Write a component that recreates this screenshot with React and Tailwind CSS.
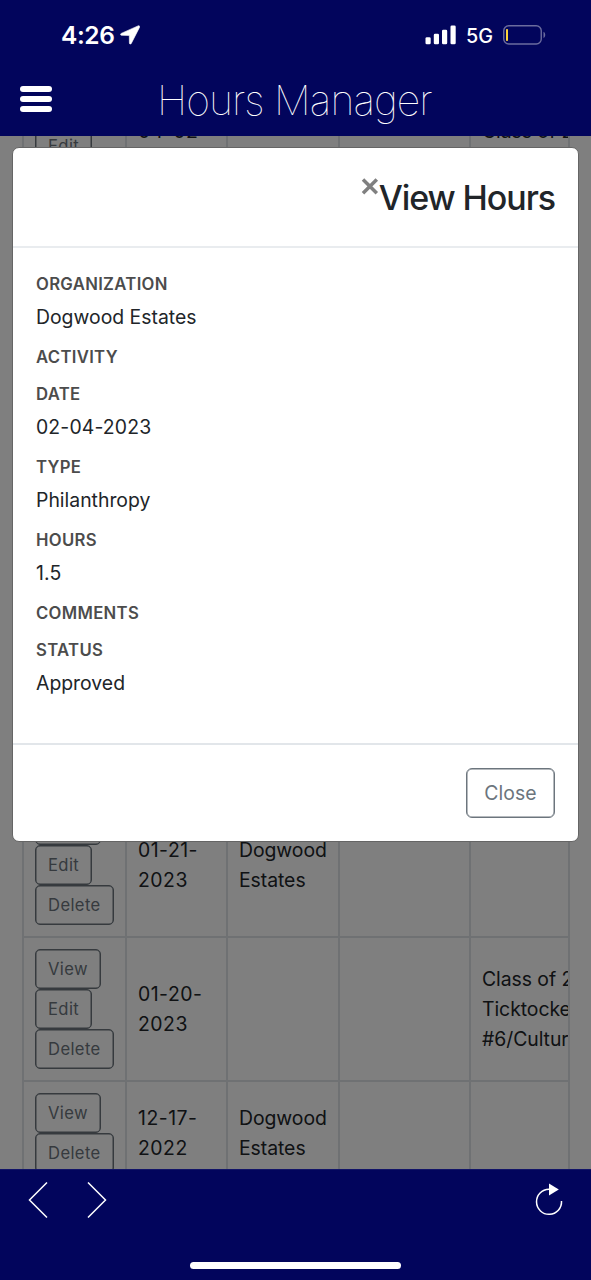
import React from "react";

const rowButton =
  "flex h-[40px] items-center rounded-[5px] border border-[#6c757d] px-[12px] text-[16.6px] tracking-[0.4px] text-[#6c757d] shadow-[inset_0_0_0_0.5px_#6c757d]";

const rows = [
  { height: "h-[144px]", actions: ["View", "Edit", "Delete"], date: ["04-02-", "2023"], org: [], detail: ["Class of 2026", "Ticktockers"] },
  { height: "h-[575px]", actions: [], date: [], org: [], detail: [] },
  { height: "h-[144px]", actions: ["View", "Edit", "Delete"], date: ["01-21-", "2023"], org: ["Dogwood", "Estates"], detail: [] },
  { height: "h-[144px]", actions: ["View", "Edit", "Delete"], date: ["01-20-", "2023"], org: [], detail: ["Class of 2026", "Ticktockers", "#6/Cultural"] },
  { height: "h-[104px]", actions: ["View", "Delete"], date: ["12-17-", "2022"], org: ["Dogwood", "Estates"], detail: [] },
];

const fields = [
  ["ORGANIZATION", "Dogwood Estates"],
  ["ACTIVITY", ""],
  ["DATE", "02-04-2023"],
  ["TYPE", "Philanthropy"],
  ["HOURS", "1.5"],
  ["COMMENTS", ""],
  ["STATUS", "Approved"],
];

function Lines({ lines, className = "tracking-[-0.05px]", last }) {
  return (
    <div
      className={
        "flex flex-col justify-center whitespace-nowrap pl-[11px] text-[19.4px] leading-[30px] " +
        className +
        (last ? "" : " border-r-2 border-[#dee2e6]")
      }
    >
      {lines.map((t) => (
        <span key={t}>{t}</span>
      ))}
    </div>
  );
}

function StatusBar() {
  return (
    <div className="flex h-[70px] items-center justify-between pl-[61px] pr-[45px]">
      <div className="flex items-center gap-[6px]">
        <span className="text-[24.5px] font-semibold leading-[30px] tracking-[-0.4px]">4:26</span>
        <svg width="20" height="20" viewBox="0 0 20 20" fill="currentColor">
          <path d="M18 .9 1.200 8.400C.2 8.900.4 10.300 1.600 10.300l7.300.1c.3 0 .4.1.4.4l.1 7.200c0 1.300 1.400 1.500 1.900.4L19.600 2.200C20 1.100 19.100.4 18 .9Z" stroke="currentColor" strokeWidth="0.600" />
        </svg>
      </div>
      <div className="flex items-center">
        <svg width="31" height="20" viewBox="0 0 31 20" fill="currentColor">
          <rect x="0.500" y="12.200" width="5.200" height="7" rx="1.300" />
          <rect x="8.800" y="8.700" width="5.200" height="10.500" rx="1.300" />
          <rect x="17" y="4.700" width="5.200" height="14.500" rx="1.300" />
          <rect x="25.500" y="0.400" width="5.200" height="18.800" rx="1.300" />
        </svg>
        <span className="ml-[10px] mt-[2px] w-[37px] text-[19.8px] font-medium leading-[24px]">5G</span>
        <svg width="43" height="20" viewBox="0 0 43 20" fill="none">
          <rect x="0.750" y="0.750" width="37.500" height="18.200" rx="5" stroke="#6b6c9e" strokeWidth="1.400" />
          <rect x="3" y="4" width="2" height="12" rx="0.800" fill="#ffd43a" />
          <path d="M40.500 6.700v6.200c2.300-1.200 2.300-5 0-6.200Z" fill="#6b6c9e" />
        </svg>
      </div>
    </div>
  );
}

function Dialog() {
  return (
    <section className="absolute left-[12px] top-[11px] flex h-[695px] w-[567px] flex-col rounded-[7px] border border-[#656565] bg-white text-[#212529]">
      <header className="flex h-[100px] items-start justify-end border-b-2 border-[#e9ecef] pr-[23px] pt-[27px]">
        <svg className="mt-[3px]" width="18" height="18" viewBox="0 0 18 18">
          <path d="M2 1.500 15.800 15.300M15.800 1.500 2 15.300" stroke="#808080" strokeWidth="3.500" />
        </svg>
        <h2 className="text-[34px] font-medium leading-[46px] tracking-[-1.080px]">View Hours</h2>
      </header>
      <div className="flex h-[495px] flex-col pl-[23px] pt-[25px]">
        {fields.map(([label, value]) => (
          <div key={label} className={value ? "h-[73px]" : "h-[37px]"}>
            <div className="h-[22px] text-[16.700px] font-semibold leading-[22px] tracking-[0.320px] text-[#4c4c4c]">{label}</div>
            <div className={"mt-[7px] text-[19.400px] leading-[30px] " + (/^\d/.test(value) ? "tracking-[0.140px]" : "tracking-[0px]")}>
              {value}
            </div>
          </div>
        ))}
      </div>
      <footer className="flex flex-1 items-start justify-end border-t-2 border-[#e2e6ea] pr-[23px] pt-[23px]">
        <button className="h-[50px] w-[89px] rounded-[6px] border border-[#6c757d] text-[19.400px] leading-[47px] tracking-[0.100px] text-[#6c757d] shadow-[inset_0_0_0_0.5px_#6c757d]">
          Close
        </button>
      </footer>
    </section>
  );
}

export default function App() {
  return (
    <div className="flex h-[1280px] w-[591px] flex-col overflow-hidden bg-[#02055c] font-['Inter','Liberation_Sans',sans-serif]">
      <header className="h-[136px] shrink-0 text-white">
        <StatusBar />
        <div className="flex h-[58px] items-center pl-[20px]">
          <div className="flex w-[32px] flex-col gap-[4px]">
            <span className="h-[6px] rounded-full bg-white" />
            <span className="h-[6px] rounded-full bg-white" />
            <span className="h-[6px] rounded-full bg-white" />
          </div>
          <h1 className="ml-[105px] mt-[2px] whitespace-nowrap text-[41px] font-[125] leading-[54px] tracking-[-0.960px]">Hours Manager</h1>
        </div>
      </header>

      <main className="relative h-[1033px] shrink-0 overflow-hidden bg-white pl-[22px] pr-[21px] text-[#212529]">
        <div className="-mt-[61px] overflow-hidden border-l-2 border-r-2 border-[#dee2e6]">
          {rows.map((row, i) => (
            <div
              key={i}
              className={"grid grid-cols-[103px_101px_112px_131px_160px] border-b-2 border-[#dee2e6] " + row.height}
            >
              <div className="flex flex-col items-start border-r-2 border-[#dee2e6] pl-[11px] pt-[11px]">
                {row.actions.map((a) => (
                  <button key={a} className={rowButton}>
                    {a}
                  </button>
                ))}
              </div>
              <Lines lines={row.date} className="tracking-[0.5px]" />
              <Lines lines={row.org} />
              <Lines lines={[]} />
              <Lines lines={row.detail} last />
            </div>
          ))}
        </div>
        <div className="absolute inset-0 bg-black/50" />
        <Dialog />
      </main>

      <footer className="flex flex-1 flex-col border-t border-[#111468] text-white">
        <div className="flex h-[60px] items-center justify-between pl-[28px] pr-[28px]">
          <div className="flex gap-[39px]">
            <svg width="20" height="36" viewBox="0 0 20 36" fill="none" stroke="currentColor" strokeWidth="1.500">
              <path d="M19 .5 1.500 18 19 35.500" />
            </svg>
            <svg width="20" height="36" viewBox="0 0 20 36" fill="none" stroke="currentColor" strokeWidth="1.500">
              <path d="M1 .5 18.500 18 1 35.500" />
            </svg>
          </div>
          <svg width="28" height="34" viewBox="0 0 28 34" fill="none">
            <path d="M14 6.300A12.500 12.500 0 1 0 26.500 18" stroke="white" strokeWidth="1.500" />
            <path d="M14 0.500v12l9.800-6Z" fill="white" />
          </svg>
        </div>
        <div className="ml-[190px] mt-[32px] h-[7px] w-[211px] rounded-full bg-white" />
      </footer>
    </div>
  );
}
